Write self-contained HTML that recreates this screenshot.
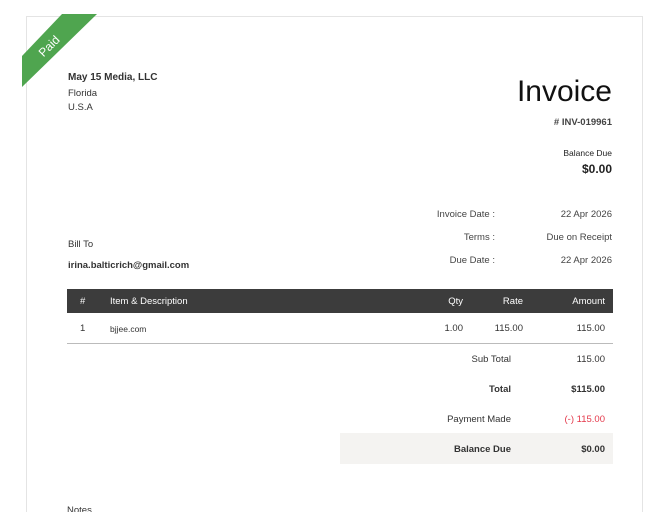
<!DOCTYPE html>
<html style="overflow:hidden;height:512px"><head><meta charset="utf-8"><style>
*{margin:0;padding:0;box-sizing:border-box}
body{width:660px;height:512px;background:#fff;font-family:"Liberation Sans",sans-serif;color:#333;position:relative;overflow:hidden;font-size:10px}
.box{position:absolute;left:26px;top:16px;width:617px;height:496px;border:1px solid #e4e4e4;border-bottom:none}
.a{position:absolute;white-space:nowrap}
.r{text-align:right}
</style></head><body>
<div class="box"></div>
<svg class="a" style="left:0;top:0" width="120" height="100">
<polygon points="22,56 62,14 97,14 22,87" fill="#4fa54f"/>
<text x="0" y="0" transform="translate(52,49) rotate(-45)" fill="#fff" font-size="12" font-family="Liberation Sans" text-anchor="middle">Paid</text>
</svg>
<div class="a" style="left:68px;top:72px;font-weight:bold;font-size:10px">May 15 Media, LLC</div>
<div class="a" style="left:68px;top:88px;font-size:9.5px">Florida</div>
<div class="a" style="left:68px;top:102px;font-size:9.5px">U.S.A</div>
<div class="a r" style="right:48px;top:75px;font-size:30px;color:#111">Invoice</div>
<div class="a r" style="right:48px;top:117px;font-weight:bold;font-size:9.5px;color:#444"># INV-019961</div>
<div class="a r" style="right:48px;top:148px;font-size:8.5px;color:#222">Balance Due</div>
<div class="a r" style="right:48px;top:162px;font-weight:bold;font-size:12px;color:#222">$0.00</div>
<div class="a r" style="right:165px;top:209px;font-size:9.5px;color:#444">Invoice Date :</div>
<div class="a r" style="right:165px;top:232px;font-size:9.5px;color:#444">Terms :</div>
<div class="a r" style="right:165px;top:255px;font-size:9.5px;color:#444">Due Date :</div>
<div class="a r" style="right:48px;top:209px;font-size:9.5px;color:#444">22 Apr 2026</div>
<div class="a r" style="right:48px;top:232px;font-size:9.5px;color:#444">Due on Receipt</div>
<div class="a r" style="right:48px;top:255px;font-size:9.5px;color:#444">22 Apr 2026</div>
<div class="a" style="left:68px;top:239px;font-size:9.5px">Bill To</div>
<div class="a" style="left:68px;top:260px;font-size:9.5px;font-weight:bold">irina.balticrich@gmail.com</div>
<div class="a" style="left:67px;top:289px;width:546px;height:24px;background:#3c3c3c"></div>
<div class="a" style="left:80px;top:296px;color:#fff;font-size:9.5px">#</div>
<div class="a" style="left:110px;top:296px;color:#fff;font-size:9.5px">Item &amp; Description</div>
<div class="a r" style="right:197px;top:296px;color:#fff;font-size:9.5px">Qty</div>
<div class="a r" style="right:137px;top:296px;color:#fff;font-size:9.5px">Rate</div>
<div class="a r" style="right:55px;top:296px;color:#fff;font-size:9.5px">Amount</div>
<div class="a" style="left:80px;top:323px;font-size:9.5px">1</div>
<div class="a" style="left:110px;top:324px;font-size:8.5px">bjjee.com</div>
<div class="a r" style="right:197px;top:323px;font-size:9.5px">1.00</div>
<div class="a r" style="right:137px;top:323px;font-size:9.5px">115.00</div>
<div class="a r" style="right:55px;top:323px;font-size:9.5px">115.00</div>
<div class="a" style="left:67px;top:343px;width:546px;height:1px;background:#bbb"></div>
<div class="a r" style="right:149px;top:354px;font-size:9.5px">Sub Total</div>
<div class="a r" style="right:55px;top:354px;font-size:9.5px">115.00</div>
<div class="a r" style="right:149px;top:384px;font-size:9.5px;font-weight:bold">Total</div>
<div class="a r" style="right:55px;top:384px;font-size:9.5px;font-weight:bold">$115.00</div>
<div class="a r" style="right:149px;top:414px;font-size:9.5px">Payment Made</div>
<div class="a r" style="right:55px;top:414px;font-size:9.5px;color:#e4384a">(-) 115.00</div>
<div class="a" style="left:340px;top:433px;width:273px;height:31px;background:#f4f3f1"></div>
<div class="a r" style="right:149px;top:444px;font-size:9.5px;font-weight:bold">Balance Due</div>
<div class="a r" style="right:55px;top:444px;font-size:9.5px;font-weight:bold">$0.00</div>
<div class="a" style="left:67px;top:505px;font-size:9.5px">Notes</div>
</body></html>
